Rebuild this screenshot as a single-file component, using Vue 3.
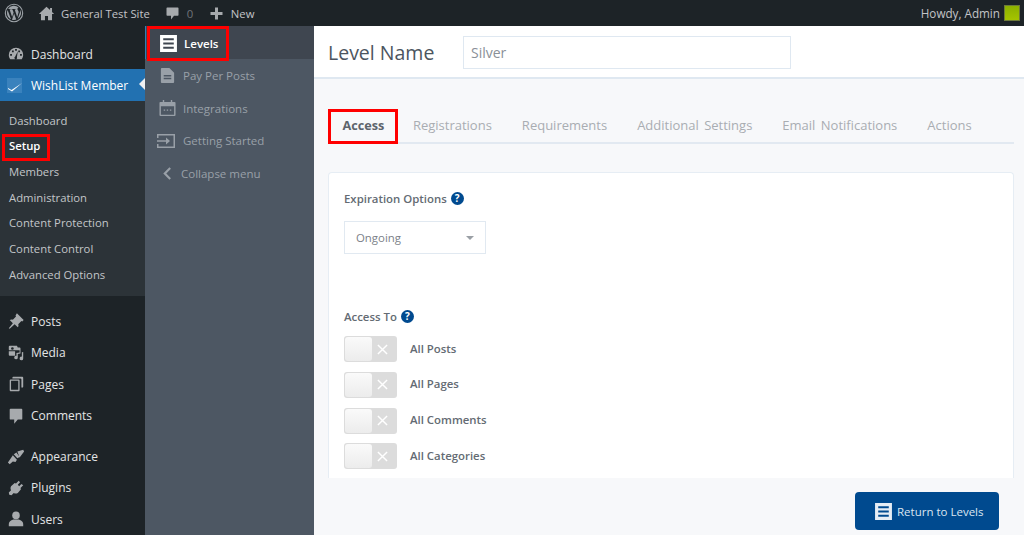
<template>
  <div class="page">
    <header class="adminbar">
      <svg class="wp-logo" viewBox="0 0 20 20" width="20" height="20">
        <circle cx="10" cy="10" r="8.7" fill="none" stroke="#9ca2a7" stroke-width="1.1" />
        <path fill="#9ca2a7" d="M3 10c0 2.8 1.6 5.200 4 6.300L3.600 7.100C3.200 8 3 9 3 10zm11.700-.4c0-.9-.3-1.500-.6-2-.4-.6-.7-1.100-.7-1.600 0-.7.5-1.300 1.200-1.300h.1A7 7 0 0 0 4 6h.5c.7 0 1.900-.1 1.900-.1.400 0 .4.500 0 .6 0 0-.4 0-.8.100l2.500 7.500 1.500-4.500-1.100-3c-.4 0-.7-.1-.7-.1-.4 0-.3-.6 0-.6 0 0 1.100.1 1.800.1s1.900-.1 1.900-.1c.4 0 .4.500 0 .6 0 0-.4 0-.8.100l2.500 7.400.7-2.300c.3-.9.500-1.600.5-2.100zM10.100 10.600 8 16.700c.6.200 1.300.3 2 .3.800 0 1.600-.1 2.300-.4l-.1-.1-2.100-5.900zm6-4c0 .2.100.5.100.8 0 .7-.1 1.500-.5 2.500l-2.100 6.100A7 7 0 0 0 16.100 6.600z" />
      </svg>
      <svg class="bar-icon home" viewBox="0 0 20 20" width="17" height="17"><path d="M10 2 1 10.500h2.500V18h4.700v-5h3.600v5h4.700v-7.500H19l-2.500-2.400V3.500h-2.300v2.400z" /></svg>
      <span class="bar-text site">General Test Site</span>
      <svg class="bar-icon" viewBox="0 0 20 20" width="15" height="15"><path d="M3 2h14a1 1 0 0 1 1 1v9a1 1 0 0 1-1 1h-5l-4 5v-5H3a1 1 0 0 1-1-1V3a1 1 0 0 1 1-1z" /></svg>
      <span class="bar-text count">0</span>
      <svg class="bar-icon plus" viewBox="0 0 20 20" width="15" height="15"><path d="M8 2h4v6h6v4h-6v6H8v-6H2V8h6z" /></svg>
      <span class="bar-text new">New</span>
      <span class="bar-spacer"></span>
      <span class="bar-text howdy">Howdy, Admin</span>
      <span class="avatar"></span>
    </header>

    <div class="body">
      <nav class="sidebar">
        <a class="menu-item first">
          <svg viewBox="0 0 20 20" width="18" height="18"><path fill-rule="evenodd" d="M10 3a8 8 0 0 0-8 8c0 1.800.6 3.400 1.600 4.800h12.800A8 8 0 0 0 18 11a8 8 0 0 0-8-8zM9 4.500h2v2H9zM5.500 6h2v2h-2zm7 0h2v2h-2zM3.500 10h2v2h-2zm11 0h2v2h-2zM9 13l3-6-1 6.500a1.500 1.500 0 1 1-2-.5z" /></svg>
          Dashboard
        </a>
        <a class="menu-item current">
          <span class="wl-icon"><svg viewBox="0 0 15 15" width="15" height="15"><path d="M1 10 4.500 12 15 5 5 13.500 1 11z" /></svg></span>
          WishList Member
          <span class="current-arrow"></span>
        </a>
        <div class="submenu">
          <a v-for="item in wlMenu" :key="item" class="sub-item" :class="{ active: item === 'Setup' }">{{ item }}</a>
        </div>
        <a class="menu-item group-start">
          <svg viewBox="0 0 20 20" width="18" height="18"><path d="M11 1.500 18.500 9 17 10.500l-1-.5-3.500 3.500c.5 1.500.2 2.500-.5 3.500L8.500 13.500 3 18.500 2 18l4.500-5.500L3 9c1-.7 2.200-1 3.500-.5L10 5l-.5-1z" /></svg>
          Posts
        </a>
        <a class="menu-item">
          <svg viewBox="0 0 20 20" width="18" height="18"><path fill-rule="evenodd" d="M3 2h8l1 2h2a1 1 0 0 1 1 1v5.500l-3 .6V15a2 2 0 1 1-1.500-1.900V10L14 9.500V7H3a1 1 0 0 1-1-1V3a1 1 0 0 1 1-1zm3 1.500a1.500 1.500 0 1 0 0 3 1.500 1.500 0 0 0 0-3zM18 9v7a2 2 0 1 1-1.500-1.900V9.300zM2 8h7v5H3a1 1 0 0 1-1-1z" /></svg>
          Media
        </a>
        <a class="menu-item">
          <svg viewBox="0 0 20 20" width="18" height="18"><path d="M7 2h10a1 1 0 0 1 1 1v10a1 1 0 0 1-1 1h-1V5a1 1 0 0 0-1-1H6V3a1 1 0 0 1 1-1z" /><path d="M4 5h9a1 1 0 0 1 1 1v11a1 1 0 0 1-1 1H4a1 1 0 0 1-1-1V6a1 1 0 0 1 1-1zm.5 1.500v10h8v-10z" fill-rule="evenodd" /></svg>
          Pages
        </a>
        <a class="menu-item">
          <svg viewBox="0 0 20 20" width="18" height="18"><path d="M4 2h12a1 1 0 0 1 1 1v10a1 1 0 0 1-1 1h-4l-4 4.500V14H4a1 1 0 0 1-1-1V3a1 1 0 0 1 1-1z" /></svg>
          Comments
        </a>
        <a class="menu-item group-start-sm">
          <svg viewBox="0 0 20 20" width="18" height="18"><path d="M11.500 4 18 2l1 2-5 6.500zM10.500 5l3.500 5-2.500 1.500-4-4.500zM6.500 8l4.500 5-1.500 2.500-3-.5-3.500 3L1 16l2.500-3.500z" /></svg>
          Appearance
        </a>
        <a class="menu-item">
          <svg viewBox="0 0 20 20" width="18" height="18"><path d="M13 2l1.500 1.500-2.500 3L13.500 8l2.500-2.500L18 7l-3 3 .5 1.500L12 15.500c-1.500.8-3 .8-4.500 0L5 18l-2.500-.5L2 15l2.500-2.500c-.8-1.500-.8-3 0-4.500L8.500 4.500 10 5z" /></svg>
          Plugins
        </a>
        <a class="menu-item">
          <svg viewBox="0 0 20 20" width="18" height="18"><circle cx="10" cy="6" r="4.200" /><path d="M7 10.500h6c3 .8 5 2.500 5 5V18H2v-2.500c0-2.500 2-4.200 5-5z" /></svg>
          Users
        </a>
      </nav>

      <aside class="levelnav">
        <a class="nav-row selected">
          <svg class="nav-icon" viewBox="0 0 18 18" width="19" height="19"><path fill-rule="evenodd" fill="#fff" d="M1 1h16v16H1zm3 3v2h10V4zm0 4v2h10V8zm0 4v2h10v-2z" /></svg>
          Levels
        </a>
        <a class="nav-row">
          <svg class="nav-icon" viewBox="0 0 18 18" width="17" height="17"><path fill-rule="evenodd" d="M3 1h8l5 5v10a1 1 0 0 1-1 1H3a1 1 0 0 1-1-1V2a1 1 0 0 1 1-1zm2 7.500V10h8V8.500zm0 3V13h8v-1.500z" /></svg>
          Pay Per Posts
        </a>
        <a class="nav-row">
          <svg class="nav-icon" viewBox="0 0 18 18" width="17" height="17"><path fill-rule="evenodd" d="M4 0h1.500v2h7V0H14v2h2.500a1 1 0 0 1 1 1v13a1 1 0 0 1-1 1h-15a1 1 0 0 1-1-1V3a1 1 0 0 1 1-1H4zM2 6.500V15.500h14v-9zM5 10h1.500v1.500H5zm3.200 0h1.500v1.500H8.200zm3.300 0H13v1.500h-1.500z" /></svg>
          Integrations
        </a>
        <a class="nav-row wide">
          <svg class="nav-icon" viewBox="0 0 20 16" width="20" height="16"><path d="M1 1h18v14H1v-4h1.500v2.500h15v-11h-15V5H1z" /><path d="M1 7.200h9V4.500L14 8l-4 3.500V8.800H1z" /></svg>
          Getting Started
        </a>
        <a class="nav-row collapse">
          <svg viewBox="0 0 10 14" width="9" height="13"><path d="M8 1 2 7l6 6" fill="none" stroke="currentColor" stroke-width="2.400" /></svg>
          Collapse menu
        </a>
      </aside>

      <main class="content">
        <div class="level-head">
          <h1>Level Name</h1>
          <input class="name-input" value="Silver" />
        </div>

        <div class="tabs">
          <a v-for="(tab, i) in tabs" :key="tab" class="tab" :class="{ active: i === 0 }">{{ tab }}</a>
        </div>

        <section class="card">
          <div class="field-label">Expiration Options <span class="help">?</span></div>
          <div class="select">Ongoing<span class="caret"></span></div>

          <div class="field-label access-label">Access To <span class="help">?</span></div>
          <div class="toggles">
            <div v-for="item in accessItems" :key="item" class="toggle-row">
              <span class="toggle">
                <span class="knob"></span>
                <svg viewBox="0 0 12 12" width="11" height="11"><path d="M1 1l10 10M11 1 1 11" stroke="#fff" stroke-width="1.600" /></svg>
              </span>
              <span class="toggle-text">{{ item }}</span>
            </div>
          </div>
        </section>

        <div class="footer">
          <button class="return-btn">
            <svg viewBox="0 0 18 18" width="19" height="19"><path fill-rule="evenodd" fill="#e6edf5" d="M1 1h16v16H1zm3 3v2h10V4zm0 4v2h10V8zm0 4v2h10v-2z" /></svg>
            Return to Levels
          </button>
        </div>
      </main>

      <!-- red annotation boxes drawn over the screenshot -->
      <span class="mark mark-levels"></span>
      <span class="mark mark-setup"></span>
      <span class="mark mark-access"></span>
    </div>
  </div>
</template>

<script setup>
const wlMenu = ['Dashboard', 'Setup', 'Members', 'Administration', 'Content Protection', 'Content Control', 'Advanced Options']
const tabs = ['Access', 'Registrations', 'Requirements', 'Additional Settings', 'Email Notifications', 'Actions']
const accessItems = ['All Posts', 'All Pages', 'All Comments', 'All Categories']
</script>

<style>
html, body { margin: 0; height: 100%; overflow: hidden; }
</style>

<style scoped>
.page {
  width: 1024px;
  height: 535px;
  overflow: hidden;
  display: flex;
  flex-direction: column;
  font-family: "Open Sans", sans-serif;
  background: #f7f8fa;
}
a { display: flex; align-items: center; }

.adminbar {
  flex: 0 0 26px;
  box-sizing: border-box;
  background: #1d2327;
  display: flex;
  align-items: center;
  padding: 0 4px 0 4px;
  font-size: 11.3px;
  color: #c3c4c7;
}
.bar-icon { fill: #a7aaad; flex-shrink: 0; }
.wp-logo { margin-right: 14px; }
.home { margin-right: 6px; }
.site { margin-right: 15px; }
.count { margin-left: 7px; color: #6f7479; margin-right: 16px; }
.new { margin-left: 6.500px; }
.bar-spacer { flex: 1; }
.howdy { font-size: 11.700px; }
.avatar {
  width: 16px;
  height: 16px;
  margin-left: 4px;
  background: linear-gradient(#8cb000, #a5c400);
  border: 1px solid #6d7a3a;
  box-sizing: border-box;
}

.body { flex: 1; display: flex; position: relative; min-height: 0; }

.sidebar {
  flex: 0 0 145px;
  background: #1d2327;
  padding-top: 12px;
  font-size: 12px;
  color: #f0f0f1;
}
.menu-item {
  height: 31.4px;
  padding-left: 7px;
  gap: 6px;
  color: #e4e5e6;
  position: relative;
}
.menu-item svg { fill: #a7aaad; flex-shrink: 0; }
.menu-item.first { height: 30.4px; padding-top: 1px; }
.menu-item.current { background: #2271b1; color: #fff; gap: 9px; }
.wl-icon { background: #3a82bd; width: 15px; height: 15px; display: flex; flex-shrink: 0; }
.menu-item .wl-icon svg { fill: #fff; }
.current-arrow {
  position: absolute;
  right: 0;
  top: 9px;
  border: 6px solid transparent;
  border-right-color: #f0f0f1;
  border-left-width: 0;
}
.group-start { margin-top: 10px; }
.group-start-sm { margin-top: 9.500px; }
.submenu {
  background: #2c3338;
  height: 195px;
  box-sizing: border-box;
  padding-top: 6.500px;
  font-size: 11.3px;
}
.sub-item {
  height: 25.700px;
  padding-left: 9px;
  color: #c3c6c9;
}
.sub-item.active { color: #fff; font-weight: 600; }

.levelnav {
  flex: 0 0 169px;
  background: #4d5763;
  font-size: 11.5px;
  color: #99a0a8;
}
.nav-row {
  height: 32.700px;
  padding-left: 14px;
  gap: 7px;
}
.nav-row.wide { padding-left: 11px; gap: 7px; }
.nav-icon { fill: #99a0a8; flex-shrink: 0; }
.nav-row.selected {
  height: 33px;
  background: #3f4650;
  color: #fff;
  font-weight: 600;
  gap: 6px;
  padding: 2px 0 0 13px;
  border-left: 1px solid #2f7fb8;
  box-sizing: border-box;
}
.nav-row.collapse { padding-left: 18px; gap: 9px; }

.content { flex: 1; min-width: 0; display: flex; flex-direction: column; background: #f7f8fa; }
.level-head {
  height: 53px;
  box-sizing: border-box;
  background: #fff;
  border-bottom: 2px solid #dfe8f1;
  display: flex;
  align-items: center;
  padding-left: 14px;
}
.level-head h1 {
  margin: 1px 0 0;
  width: 135px;
  font-size: 19.500px;
  font-weight: 400;
  color: #4c5560;
}
.name-input {
  box-sizing: border-box;
  width: 328px;
  height: 33px;
  margin-top: 1px;
  border: 1px solid #dfe8f1;
  padding: 0 7px;
  font: 14px "Open Sans", sans-serif;
  color: #8a9097;
  background: #fff;
  outline: none;
}

.tabs {
  margin: 30px 10px 0 14px;
  height: 35px;
  box-sizing: border-box;
  padding-bottom: 2px;
  border-bottom: 2px solid #e2e9f1;
  display: flex;
}
.tab {
  padding: 0 14.500px;
  margin-right: 1px;
  font-size: 13px;
  word-spacing: 2px;
  color: #a9adb2;
}
.tab.active { font-weight: 700; font-size: 12.700px; color: #5d646c; padding-right: 13px; }

.card {
  margin: 28px 10px 0 14px;
  height: 306px;
  box-sizing: border-box;
  background: #fff;
  border: 1px solid #e6edf4;
  border-bottom: none;
  border-radius: 4px 4px 0 0;
  padding: 17px 15px 0;
}
.field-label {
  display: flex;
  align-items: center;
  gap: 4px;
  height: 16px;
  font-size: 11.400px;
  font-weight: 600;
  color: #646b73;
}
.help {
  width: 13px;
  height: 13px;
  border-radius: 50%;
  background: #004a8f;
  color: #fff;
  font-size: 10px;
  font-weight: 700;
  line-height: 13px;
  text-align: center;
}
.select {
  width: 142px;
  height: 33px;
  box-sizing: border-box;
  margin-top: 15px;
  border: 1px solid #e1e9f1;
  padding: 0 11px;
  display: flex;
  align-items: center;
  justify-content: space-between;
  font-size: 11.400px;
  color: #7b8188;
}
.caret { border: 4px solid transparent; border-top: 4px solid #9a9fa5; border-bottom: 0; }
.access-label { margin-top: 54px; }
.toggles { margin-top: 12px; display: flex; flex-direction: column; gap: 9.800px; }
.toggle-row { display: flex; align-items: center; gap: 13px; }
.toggle {
  width: 53px;
  height: 26px;
  background: #dcdcdc;
  border-radius: 3px;
  display: flex;
  align-items: center;
  overflow: hidden;
}
.toggle svg { margin-left: 5px; }
.knob {
  width: 27px;
  height: 24px;
  margin-left: 1px;
  background: linear-gradient(#fafafa, #ececec);
  border-radius: 3px;
}
.toggle-text { font-size: 11.400px; font-weight: 600; color: #646b73; margin-bottom: 2px; }

.footer { display: flex; justify-content: flex-end; padding: 14px 25px 0 0; }
.return-btn {
  width: 144px;
  height: 38px;
  border: none;
  border-radius: 4px;
  background: #004a8f;
  color: #dbe6f1;
  display: flex;
  align-items: center;
  gap: 4px;
  padding: 0 0 0 19px;
  font: 11.500px "Open Sans", sans-serif;
}

.mark { position: absolute; border: 3px solid #f00; box-sizing: border-box; pointer-events: none; }
.mark-levels { left: 147px; top: 0; width: 82px; height: 35px; }
.mark-setup { left: 2px; top: 108px; width: 48px; height: 27px; }
.mark-access { left: 328px; top: 83px; width: 70px; height: 35px; }
</style>
